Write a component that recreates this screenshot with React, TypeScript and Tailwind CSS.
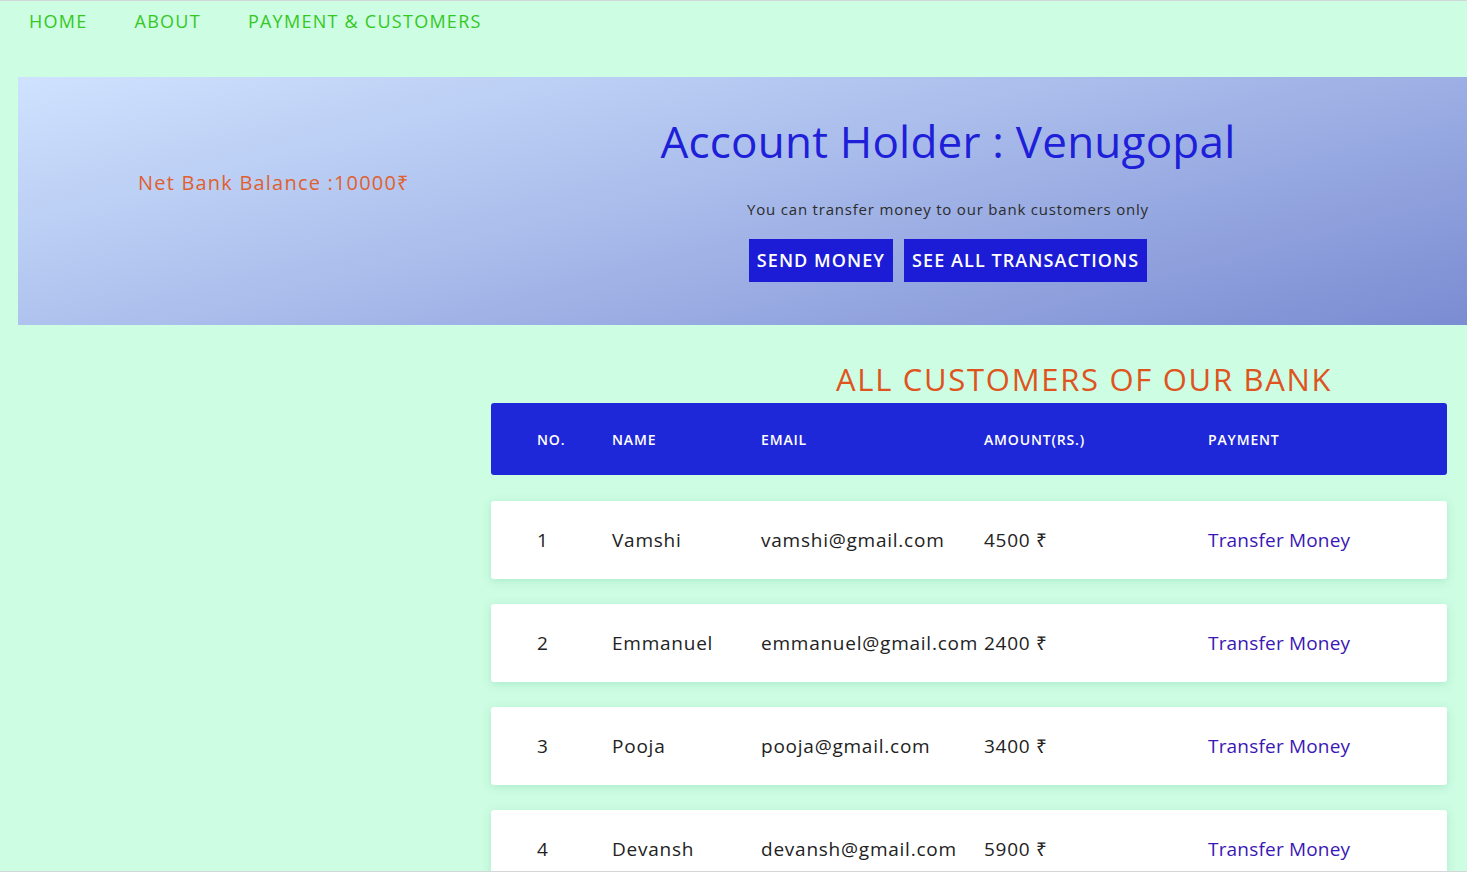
const customers = [
  { no: 1, name: 'Vamshi', email: 'vamshi@gmail.com', amount: 4500 },
  { no: 2, name: 'Emmanuel', email: 'emmanuel@gmail.com', amount: 2400 },
  { no: 3, name: 'Pooja', email: 'pooja@gmail.com', amount: 3400 },
  { no: 4, name: 'Devansh', email: 'devansh@gmail.com', amount: 5900 },
];

const cols = 'grid grid-cols-[75px_149px_223px_224px_1fr] items-center pl-[46px]';

export default function App() {
  return (
    <div className="h-[872px] overflow-hidden border-y border-[#d3d6d9] bg-[#cdfde3] font-['Open_Sans',sans-serif] tracking-[0.05em]">
      {/* Top nav */}
      <nav className="flex h-[41px] items-center gap-[47px] pl-[29px] text-[18px] uppercase tracking-[0.07em] text-[#35c81f]">
        <a href="#">Home</a>
        <a href="#">About</a>
        <a href="#">Payment &amp; Customers</a>
      </nav>

      {/* Hero */}
      <section className="ml-[18px] mt-[35px] flex h-[248px] bg-[linear-gradient(165deg,#cfe2fe_0%,#afc2ee_40%,#7b8cd2_100%)]">
        <div className="flex w-[450px] items-center pb-[36px] pl-[120px]">
          <p className="text-[20px] tracking-[0.06em] text-[#e0602f]">Net Bank Balance :10000₹</p>
        </div>
        <div className="flex w-[960px] flex-col items-center pt-[36px]">
          <h1 className="text-[44px] leading-[56px] tracking-[0.005em] text-[#1d20d8]">Account Holder : Venugopal</h1>
          <p className="mt-[29px] text-[15px] text-[#2b2b2b]">You can transfer money to our bank customers only</p>
          <div className="mt-[18px] flex gap-[11px]">
            <button className="h-[43px] bg-[#1c1cd6] px-[8px] text-[18px] font-semibold tracking-[0.06em] text-white">SEND MONEY</button>
            <button className="h-[43px] bg-[#1c1cd6] px-[8px] text-[18px] font-semibold tracking-[0.06em] text-white">SEE ALL TRANSACTIONS</button>
          </div>
        </div>
      </section>

      {/* Customers */}
      <section className="ml-[491px] mr-[20px] mt-[32px]">
        <h2 className="pl-[345px] text-[31px] leading-[44px] tracking-[0.055em] text-[#df541e]">ALL CUSTOMERS OF OUR BANK</h2>
        <div className={`${cols} mt-[2px] h-[72px] rounded-[3px] bg-[#1e28d8] text-[14px] font-semibold tracking-[0.06em] text-white`}>
          <span>NO.</span>
          <span>NAME</span>
          <span>EMAIL</span>
          <span>AMOUNT(RS.)</span>
          <span>PAYMENT</span>
        </div>
        <div className="mt-[26px] flex flex-col gap-[25px]">
          {customers.map((c) => (
            <div
              key={c.no}
              className={`${cols} h-[78px] rounded-[3px] bg-white text-[19px] tracking-[0.04em] text-[#222] shadow-[0_2px_8px_rgba(80,180,130,0.25)]`}
            >
              <span>{c.no}</span>
              <span>{c.name}</span>
              <span>{c.email}</span>
              <span>{c.amount} ₹</span>
              <a href="#" className="tracking-[0.01em] text-[#3b17b5]">Transfer Money</a>
            </div>
          ))}
        </div>
      </section>
    </div>
  );
}
